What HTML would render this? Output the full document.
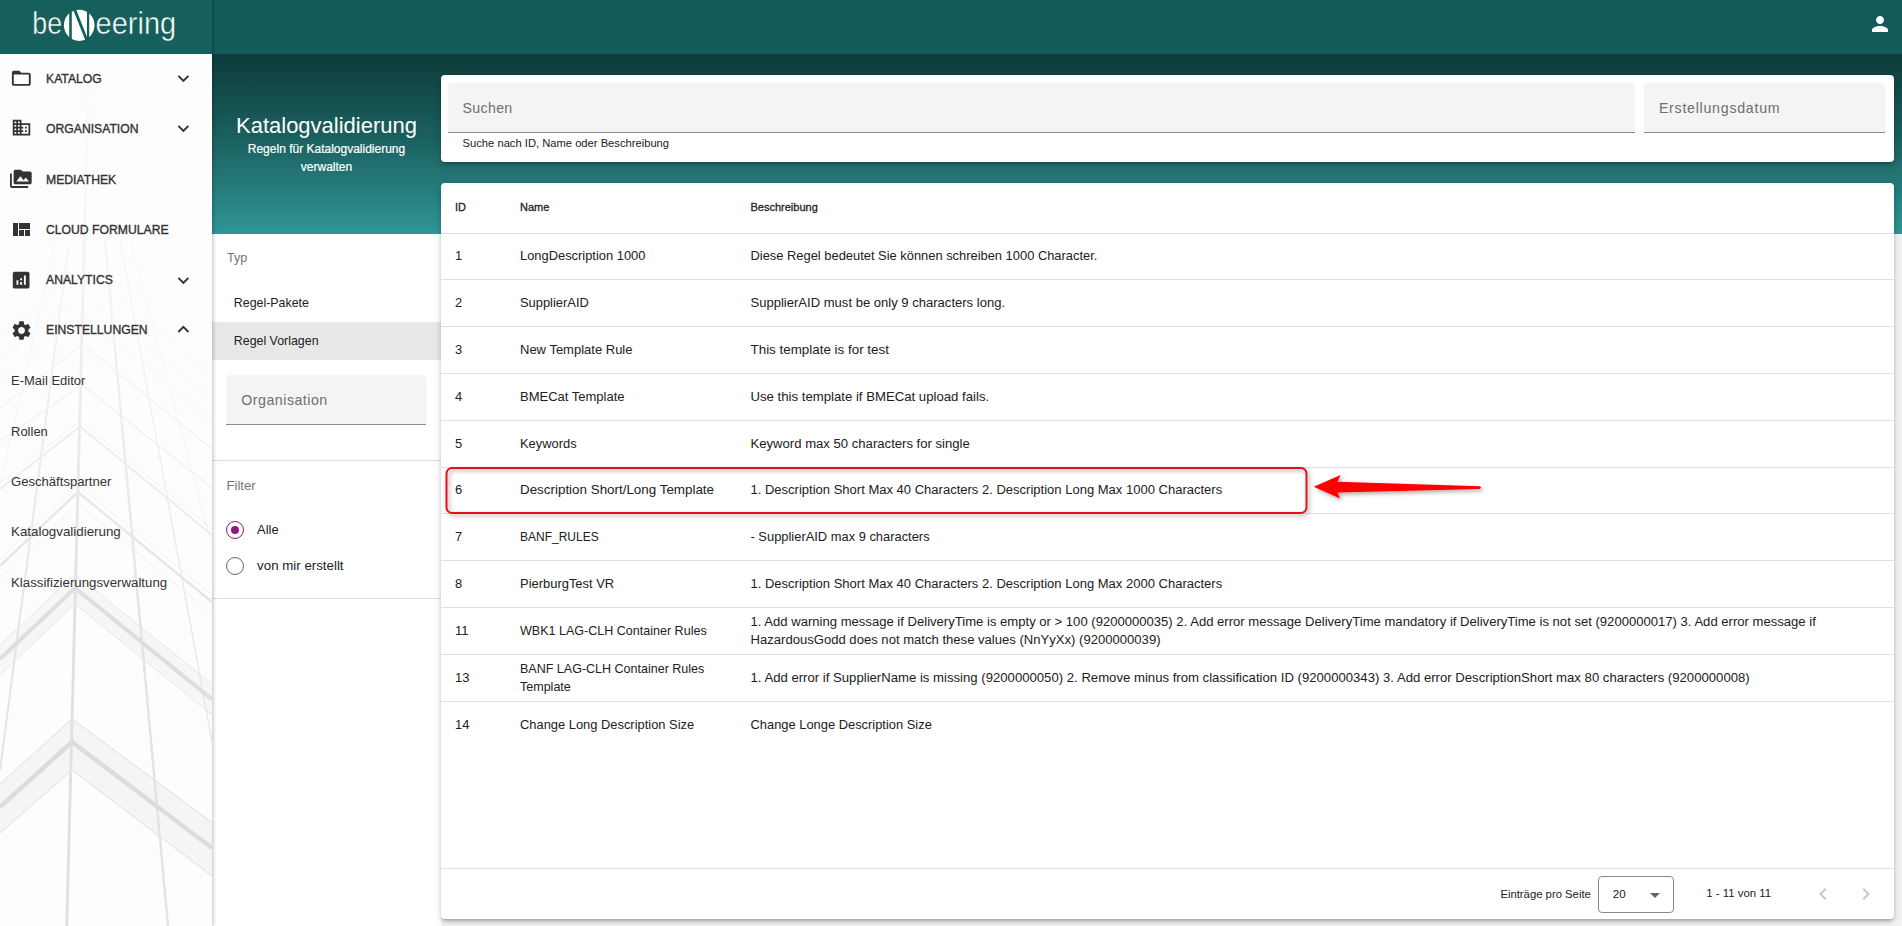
<!DOCTYPE html>
<html><head><meta charset="utf-8">
<style>
*{box-sizing:border-box;margin:0;padding:0}
html,body{width:1902px;height:926px;overflow:hidden;font-family:"Liberation Sans",sans-serif;background:#f2f2f2;color:#212121}
.a{position:absolute}
#hdr{left:0;top:0;width:1902px;height:54px;background:#135b59;z-index:3}
#grad{left:212px;top:54px;width:1690px;height:180px;background:linear-gradient(#0e3b3b 0%,#1a5f5e 45%,#2f9695 100%)}
#side{left:0;top:54px;width:212px;height:872px;background:#fdfdfd;z-index:2;box-shadow:1px 0 4px rgba(0,0,0,.25);overflow:hidden}
#lp{left:212px;top:234px;width:229px;height:692px;background:#fff}
.card{background:#fff;border-radius:4px;box-shadow:0 3px 3px -2px rgba(0,0,0,.2),0 3px 4px 0 rgba(0,0,0,.14),0 1px 8px 0 rgba(0,0,0,.12)}
.cell{position:absolute;color:#212121;white-space:nowrap;line-height:18px}
.hl{position:absolute;left:441px;width:1453px;height:1px;background:#e0e0e0}
</style></head>
<body>
<div id="hdr" class="a">
  <div class="a" style="left:0;top:0;width:240px;height:54px;overflow:hidden"><div class="a" style="left:0;top:-10px;width:212px;height:74px;background:#155f5d;box-shadow:1px 0 3px rgba(0,0,0,.3)"></div></div>
  <svg class="a" style="left:0;top:0" width="212" height="54" viewBox="0 0 212 54">
    <text x="32.3" y="33.7" font-family="Liberation Sans" font-size="32" fill="#fff" stroke="#155f5d" stroke-width="0.5" textLength="29.8" lengthAdjust="spacingAndGlyphs">be</text>
    <ellipse cx="79.2" cy="25.3" rx="15.3" ry="15.6" fill="#fff"/>
    <rect x="69.2" y="8" width="2.6" height="36" fill="#155f5d"/>
    <rect x="87" y="8" width="2.2" height="36" fill="#155f5d"/>
    <polygon points="72.5,8 75.5,8 89,42 86,42" fill="#155f5d"/>
    <text x="95.6" y="33.7" font-family="Liberation Sans" font-size="32" fill="#fff" stroke="#155f5d" stroke-width="0.5" textLength="80.6" lengthAdjust="spacingAndGlyphs">eering</text>
  </svg>
  <svg class="a" style="left:1868px;top:12px" width="24" height="24" viewBox="0 0 24 24"><path fill="#fff" d="M12 12c2.21 0 4-1.79 4-4s-1.79-4-4-4-4 1.79-4 4 1.79 4 4 4zm0 2c-2.67 0-8 1.34-8 4v2h16v-2c0-2.66-5.33-4-8-4z"/></svg>
</div>
<div id="grad" class="a"></div>
<div id="side" class="a">
<svg class="a" style="left:0;top:0" width="212" height="872" viewBox="0 54 212 872"><defs><linearGradient id="fadeg" x1="0" y1="0" x2="0" y2="1"><stop offset="0" stop-color="#000"/><stop offset="0.15" stop-color="#333"/><stop offset="0.45" stop-color="#aaa"/><stop offset="0.65" stop-color="#fff"/></linearGradient><mask id="fadem" maskUnits="userSpaceOnUse" x="0" y="54" width="212" height="872"><rect x="0" y="54" width="212" height="872" fill="url(#fadeg)"/></mask></defs><g mask="url(#fadem)"><polygon points="0,784 72,719 212,822.5 212,876 72,770 0,833" fill="#f5f5f5"/><polygon points="0,645 75,574 212,684 212,715 75,604 0,675" fill="#f6f6f6"/><line x1="89" y1="54" x2="66.8" y2="926" stroke="#e0e0e0" stroke-width="2.8"/><line x1="68" y1="250" x2="0" y2="770" stroke="#e4e4e4" stroke-width="2"/><line x1="55" y1="243" x2="0" y2="485" stroke="#efefef" stroke-width="1"/><line x1="105" y1="240" x2="168" y2="926" stroke="#e3e3e3" stroke-width="2.4"/><line x1="120" y1="240" x2="212" y2="742" stroke="#e6e6e6" stroke-width="1.3"/><line x1="131" y1="245" x2="212" y2="545" stroke="#efefef" stroke-width="1"/><polyline points="0,807 72,742 212,848" fill="none" stroke="#dcdcdc" stroke-width="4.5"/><polyline points="0,784 72,719 212,822.5" fill="none" stroke="#e6e6e6" stroke-width="1.2"/><polyline points="0,833 72,770 212,876" fill="none" stroke="#e6e6e6" stroke-width="1.2"/><polyline points="0,659 75,588 212,699.4" fill="none" stroke="#dedede" stroke-width="4"/><polyline points="0,645 75,574 212,684" fill="none" stroke="#e6e6e6" stroke-width="1"/><polyline points="0,675 75,604 212,715" fill="none" stroke="#e6e6e6" stroke-width="1"/><polyline points="0,566 77.8,492 212,602" fill="none" stroke="#e3e3e3" stroke-width="2.5"/><polyline points="0,559 77.8,485 212,595" fill="none" stroke="#efefef" stroke-width="1"/><polyline points="0,578 77.8,504 212,614" fill="none" stroke="#efefef" stroke-width="1"/><polyline points="0,489 80,426.5 212,535" fill="none" stroke="#e6e6e6" stroke-width="1.8"/><polyline points="0,483 80,420.6 212,529" fill="none" stroke="#efefef" stroke-width="1"/><polyline points="0,441 82,384.7 212,488" fill="none" stroke="#e9e9e9" stroke-width="1.2"/><polyline points="0,408 82.6,344 212,449" fill="none" stroke="#eaeaea" stroke-width="1.2"/><polyline points="0,380 83,316 212,421" fill="none" stroke="#efefef" stroke-width="1"/><polyline points="0,358 84,294 212,399" fill="none" stroke="#f0f0f0" stroke-width="1"/><polyline points="0,334 85,270 212,375" fill="none" stroke="#f2f2f2" stroke-width="1"/></g></svg>
<svg class="a" style="left:10.2px;top:12.80px" width="22.6" height="22.6" viewBox="0 0 24 24"><path fill="#333" d="M20 6h-8l-2-2H4c-1.1 0-1.99.9-1.99 2L2 18c0 1.1.9 2 2 2h16c1.1 0 2-.9 2-2V8c0-1.1-.9-2-2-2zm0 12H4V8h16v10z"/></svg>
<div class="a" style="left:46px;top:18.67px;font-size:12.2px;line-height:12.2px;color:#333;font-weight:400;white-space:nowrap;-webkit-text-stroke:0.35px #333">KATALOG</div>
<svg class="a" style="left:172.10px;top:12.81px" width="22.8" height="22.8" viewBox="0 0 24 24"><path fill="#333" d="M16.59 8.59L12 13.17 7.41 8.59 6 10l6 6 6-6z"/></svg>
<svg class="a" style="left:11px;top:62.50px" width="21" height="21" viewBox="0 0 24 24"><path fill="#333" d="M12 7V3H2v18h20V7H12zM6 19H4v-2h2v2zm0-4H4v-2h2v2zm0-4H4V9h2v2zm0-4H4V5h2v2zm4 12H8v-2h2v2zm0-4H8v-2h2v2zm0-4H8V9h2v2zm0-4H8V5h2v2zm10 12h-8v-2h2v-2h-2v-2h2v-2h-2V9h8v10zm-2-8h-2v2h2v-2zm0 4h-2v2h2v-2z"/></svg>
<div class="a" style="left:46px;top:68.97px;font-size:12.2px;line-height:12.2px;color:#333;font-weight:400;white-space:nowrap;-webkit-text-stroke:0.35px #333">ORGANISATION</div>
<svg class="a" style="left:172.10px;top:63.12px" width="22.8" height="22.8" viewBox="0 0 24 24"><path fill="#333" d="M16.59 8.59L12 13.17 7.41 8.59 6 10l6 6 6-6z"/></svg>
<svg class="a" style="left:10.3px;top:114.20px" width="21.7" height="21.7" viewBox="0 0 24 24"><path fill="#333" d="M2 6H0v5h.01L0 20c0 1.1.9 2 2 2h18v-2H2V6zm20-2h-8l-2-2H6c-1.1 0-1.99.9-1.99 2L4 16c0 1.1.9 2 2 2h16c1.1 0 2-.9 2-2V6c0-1.1-.9-2-2-2zM7 15l4.5-6 3.5 4.51 2.5-3.01L21 15H7z"/></svg>
<div class="a" style="left:46px;top:119.67px;font-size:12.2px;line-height:12.2px;color:#333;font-weight:400;white-space:nowrap;-webkit-text-stroke:0.35px #333">MEDIATHEK</div>
<svg class="a" style="left:9.3px;top:163.50px" width="24" height="24" viewBox="0 0 24 24"><path fill="#333" d="M10 18h5v-6h-5v6zm-6 0h5V5H4v13zm12 0h5v-6h-5v6zM10 5v6h11V5H10z"/></svg>
<div class="a" style="left:46px;top:169.67px;font-size:12.2px;line-height:12.2px;color:#333;font-weight:400;white-space:nowrap;-webkit-text-stroke:0.35px #333">CLOUD FORMULARE</div>
<svg class="a" style="left:10px;top:214.60px" width="22.3" height="22.3" viewBox="0 0 24 24"><path fill="#333" d="M19 3H5c-1.1 0-2 .9-2 2v14c0 1.1.9 2 2 2h14c1.1 0 2-.9 2-2V5c0-1.1-.9-2-2-2zM9 17H7v-5h2v5zm4 0h-2v-3h2v3zm0-5h-2v-2h2v2zm4 5h-2V7h2v10z"/></svg>
<div class="a" style="left:46px;top:219.77px;font-size:12.2px;line-height:12.2px;color:#333;font-weight:400;white-space:nowrap;-webkit-text-stroke:0.35px #333">ANALYTICS</div>
<svg class="a" style="left:172.10px;top:214.81px" width="22.8" height="22.8" viewBox="0 0 24 24"><path fill="#333" d="M16.59 8.59L12 13.17 7.41 8.59 6 10l6 6 6-6z"/></svg>
<svg class="a" style="left:9.6px;top:264.80px" width="23" height="23" viewBox="0 0 24 24"><path fill="#333" d="M19.14 12.94c.04-.3.06-.61.06-.94 0-.32-.02-.64-.07-.94l2.03-1.58c.18-.14.23-.41.12-.61l-1.92-3.32c-.12-.22-.37-.29-.59-.22l-2.39.96c-.5-.38-1.03-.7-1.62-.94l-.36-2.54c-.04-.24-.24-.41-.48-.41h-3.84c-.24 0-.43.17-.47.41l-.36 2.54c-.59.24-1.13.57-1.62.94l-2.39-.96c-.22-.08-.47 0-.59.22L2.74 8.87c-.12.21-.08.47.12.61l2.03 1.58c-.05.3-.09.63-.09.94s.02.64.07.94l-2.03 1.58c-.18.14-.23.41-.12.61l1.92 3.32c.12.22.37.29.59.22l2.39-.96c.5.38 1.03.7 1.62.94l.36 2.54c.05.24.24.41.48.41h3.84c.24 0 .44-.17.47-.41l.36-2.54c.59-.24 1.13-.56 1.62-.94l2.39.96c.22.08.47 0 .59-.22l1.92-3.32c.12-.22.07-.47-.12-.61l-2.01-1.58zM12 15.6c-1.98 0-3.6-1.62-3.6-3.6s1.62-3.6 3.6-3.6 3.6 1.62 3.6 3.6-1.62 3.6-3.6 3.6z"/></svg>
<div class="a" style="left:46px;top:270.47px;font-size:12.2px;line-height:12.2px;color:#333;font-weight:400;white-space:nowrap;-webkit-text-stroke:0.35px #333">EINSTELLUNGEN</div>
<svg class="a" style="left:172.10px;top:264.31px" width="22.8" height="22.8" viewBox="0 0 24 24"><path fill="#333" d="M12 8l-6 6 1.41 1.41L12 10.83l4.59 4.58L18 14z"/></svg>
<div class="a" style="left:11px;top:320.40px;font-size:13px;line-height:13px;color:#333;font-weight:400;white-space:nowrap">E-Mail Editor</div>
<div class="a" style="left:11px;top:370.70px;font-size:13px;line-height:13px;color:#333;font-weight:400;white-space:nowrap">Rollen</div>
<div class="a" style="left:11px;top:420.91px;font-size:13.1px;line-height:13.1px;color:#333;font-weight:400;white-space:nowrap">Geschäftspartner</div>
<div class="a" style="left:11px;top:471.00px;font-size:13.35px;line-height:13.35px;color:#333;font-weight:400;white-space:nowrap">Katalogvalidierung</div>
<div class="a" style="left:11px;top:521.78px;font-size:13.25px;line-height:13.25px;color:#333;font-weight:400;white-space:nowrap">Klassifizierungsverwaltung</div>
</div>
<div id="lp" class="a"></div>
<div class="a" style="left:212px;top:113.4px;width:229px;text-align:center;color:#fff;z-index:1"><div style="font-size:22px;line-height:26px">Katalogvalidierung</div><div style="font-size:12px;line-height:18px;margin-top:1px;-webkit-text-stroke:0.2px #fff">Regeln für Katalogvalidierung<br>verwalten</div></div>
<div class="a" style="left:227px;top:252.43px;font-size:12.6px;line-height:12.6px;color:#757575;font-weight:400;white-space:nowrap;">Typ</div>
<div class="a" style="left:212px;top:322px;width:229px;height:38px;background:#e8e8e8"></div>
<div class="a" style="left:233.8px;top:296.50px;font-size:12.4px;line-height:12.4px;color:#212121;font-weight:400;white-space:nowrap;">Regel-Pakete</div>
<div class="a" style="left:233.8px;top:334.50px;font-size:12.4px;line-height:12.4px;color:#212121;font-weight:400;white-space:nowrap;">Regel Vorlagen</div>
<div class="a" style="left:226px;top:375px;width:200px;height:50px;background:#f4f4f4;border-radius:4px 4px 0 0;border-bottom:1px solid #8a8a8a"></div>
<div class="a" style="left:241.3px;top:392.98px;font-size:14.2px;line-height:14.2px;color:#6f6f6f;font-weight:400;white-space:nowrap;letter-spacing:0.5px">Organisation</div>
<div class="a" style="left:212px;top:460px;width:229px;height:1px;background:#e0e0e0"></div>
<div class="a" style="left:226.4px;top:479.03px;font-size:13.2px;line-height:13.2px;color:#757575;font-weight:400;white-space:nowrap;">Filter</div>
<div class="a" style="left:226px;top:521px;width:18px;height:18px;border:1.7px solid #8b1a7f;border-radius:50%"></div>
<div class="a" style="left:231px;top:526px;width:8px;height:8px;background:#8b1a7f;border-radius:50%"></div>
<div class="a" style="left:257.1px;top:523.98px;font-size:12.9px;line-height:12.9px;color:#212121;font-weight:400;white-space:nowrap;">Alle</div>
<div class="a" style="left:226px;top:557px;width:18px;height:18px;border:1.6px solid #666;border-radius:50%"></div>
<div class="a" style="left:257.1px;top:559.14px;font-size:13.3px;line-height:13.3px;color:#212121;font-weight:400;white-space:nowrap;">von mir erstellt</div>
<div class="a" style="left:212px;top:598px;width:229px;height:1px;background:#e0e0e0"></div>
<div class="a card" style="left:441px;top:75px;width:1453px;height:87px"></div>
<div class="a" style="left:448px;top:83px;width:1187px;height:50px;background:#f4f4f4;border-radius:4px 4px 0 0;border-bottom:1px solid #8a8a8a"></div>
<div class="a" style="left:462.6px;top:100.88px;font-size:14.2px;line-height:14.2px;color:#6f6f6f;font-weight:400;white-space:nowrap;letter-spacing:0.3px">Suchen</div>
<div class="a" style="left:462.6px;top:138.22px;font-size:11.2px;line-height:11.2px;color:#222;font-weight:400;white-space:nowrap;">Suche nach ID, Name oder Beschreibung</div>
<div class="a" style="left:1644px;top:83px;width:241px;height:50px;background:#f4f4f4;border-radius:4px 4px 0 0;border-bottom:1px solid #8a8a8a"></div>
<div class="a" style="left:1658.9px;top:100.88px;font-size:14.2px;line-height:14.2px;color:#6f6f6f;font-weight:400;white-space:nowrap;letter-spacing:0.74px">Erstellungsdatum</div>
<div class="a card" style="left:441px;top:183px;width:1453px;height:736px"></div>
<div class="a" style="left:455px;top:202.19px;font-size:11px;line-height:11px;color:#1f1f1f;font-weight:400;white-space:nowrap;-webkit-text-stroke:0.3px #1f1f1f">ID</div>
<div class="a" style="left:520px;top:202.19px;font-size:11px;line-height:11px;color:#1f1f1f;font-weight:400;white-space:nowrap;-webkit-text-stroke:0.3px #1f1f1f">Name</div>
<div class="a" style="left:750.5px;top:202.19px;font-size:11px;line-height:11px;color:#1f1f1f;font-weight:400;white-space:nowrap;-webkit-text-stroke:0.3px #1f1f1f">Beschreibung</div>
<div class="hl" style="top:233px"></div>
<div class="hl" style="top:279px"></div>
<div class="hl" style="top:326px"></div>
<div class="hl" style="top:373px"></div>
<div class="hl" style="top:420px"></div>
<div class="hl" style="top:467px"></div>
<div class="hl" style="top:513px"></div>
<div class="hl" style="top:560px"></div>
<div class="hl" style="top:607px"></div>
<div class="hl" style="top:654px"></div>
<div class="hl" style="top:701px"></div>
<div class="cell" style="left:455px;top:247.30px;font-size:12.9px">1</div>
<div class="cell" style="left:520px;top:247.30px;font-size:12.9px">LongDescription 1000</div>
<div class="cell" style="left:750.5px;top:247.30px;font-size:12.9px">Diese Regel bedeutet Sie können schreiben 1000 Character.</div>
<div class="cell" style="left:455px;top:294.10px;font-size:12.9px">2</div>
<div class="cell" style="left:520px;top:294.10px;font-size:12.9px">SupplierAID</div>
<div class="cell" style="left:750.5px;top:294.05px;font-size:13.05px">SupplierAID must be only 9 characters long.</div>
<div class="cell" style="left:455px;top:341.10px;font-size:12.9px">3</div>
<div class="cell" style="left:520px;top:341.07px;font-size:13.0px">New Template Rule</div>
<div class="cell" style="left:750.5px;top:340.93px;font-size:13.4px">This template is for test</div>
<div class="cell" style="left:455px;top:387.60px;font-size:12.9px">4</div>
<div class="cell" style="left:520px;top:387.57px;font-size:13.0px">BMECat Template</div>
<div class="cell" style="left:750.5px;top:387.50px;font-size:13.18px">Use this template if BMECat upload fails.</div>
<div class="cell" style="left:455px;top:434.60px;font-size:12.9px">5</div>
<div class="cell" style="left:520px;top:434.60px;font-size:12.9px">Keywords</div>
<div class="cell" style="left:750.5px;top:434.52px;font-size:13.12px">Keyword max 50 characters for single</div>
<div class="cell" style="left:455px;top:481.40px;font-size:12.9px">6</div>
<div class="cell" style="left:520px;top:481.23px;font-size:13.4px">Description Short/Long Template</div>
<div class="cell" style="left:750.5px;top:481.36px;font-size:13.02px">1. Description Short Max 40 Characters 2. Description Long Max 1000 Characters</div>
<div class="cell" style="left:455px;top:528.10px;font-size:12.9px">7</div>
<div class="cell" style="left:520px;top:528.41px;font-size:12.0px">BANF_RULES</div>
<div class="cell" style="left:750.5px;top:528.10px;font-size:12.9px">- SupplierAID max 9 characters</div>
<div class="cell" style="left:455px;top:574.80px;font-size:12.9px">8</div>
<div class="cell" style="left:520px;top:574.78px;font-size:12.95px">PierburgTest VR</div>
<div class="cell" style="left:750.5px;top:574.76px;font-size:13.02px">1. Description Short Max 40 Characters 2. Description Long Max 2000 Characters</div>
<div class="cell" style="left:455px;top:621.60px;font-size:12.9px">11</div>
<div class="cell" style="left:520px;top:621.72px;font-size:12.54px">WBK1 LAG-CLH Container Rules</div>
<div class="cell" style="left:750.5px;top:612.54px;font-size:13.08px">1. Add warning message if DeliveryTime is empty or &gt; 100 (9200000035) 2. Add error message DeliveryTime mandatory if DeliveryTime is not set (9200000017) 3. Add error message if<br>HazardousGodd does not match these values (NnYyXx) (9200000039)</div>
<div class="cell" style="left:455px;top:668.60px;font-size:12.9px">13</div>
<div class="cell" style="left:520px;top:659.73px;font-size:12.52px">BANF LAG-CLH Container Rules<br>Template</div>
<div class="cell" style="left:750.5px;top:668.51px;font-size:13.15px">1. Add error if SupplierName is missing (9200000050) 2. Remove minus from classification ID (9200000343) 3. Add error DescriptionShort max 80 characters (9200000008)</div>
<div class="cell" style="left:455px;top:715.60px;font-size:12.9px">14</div>
<div class="cell" style="left:520px;top:715.60px;font-size:12.9px">Change Long Description Size</div>
<div class="cell" style="left:750.5px;top:715.60px;font-size:12.9px">Change Longe Description Size</div>
<div class="hl" style="top:868px"></div>
<div class="a" style="left:1500.4px;top:888.83px;font-size:11.3px;line-height:11.3px;color:#222;font-weight:400;white-space:nowrap;">Einträge pro Seite</div>
<div class="a" style="left:1598px;top:876px;width:76px;height:37px;border:1px solid #8a8a8a;border-radius:4px"></div>
<div class="a" style="left:1612.7px;top:887.78px;font-size:11.6px;line-height:11.6px;color:#222;font-weight:400;white-space:nowrap;">20</div>
<svg class="a" style="left:1650px;top:892.6px" width="10" height="5" viewBox="0 0 10 5"><path d="M0 0l5 5 5-5z" fill="#666"/></svg>
<div class="a" style="left:1706.3px;top:887.65px;font-size:11.4px;line-height:11.4px;color:#222;font-weight:400;white-space:nowrap;">1 - 11 von 11</div>
<svg class="a" style="left:1811px;top:882px" width="24" height="24" viewBox="0 0 24 24"><path fill="#c8c8c8" d="M15.41 7.41L14 6l-6 6 6 6 1.41-1.41L10.83 12z"/></svg>
<svg class="a" style="left:1854px;top:882px" width="24" height="24" viewBox="0 0 24 24"><path fill="#c8c8c8" d="M10 6L8.59 7.41 13.17 12l-4.58 4.59L10 18l6-6z"/></svg>
<svg class="a" style="left:430px;top:455px;z-index:5" width="1070" height="70" viewBox="430 455 1070 70">
<defs><filter id="ds" x="-5%" y="-50%" width="110%" height="200%"><feDropShadow dx="2" dy="2" stdDeviation="2" flood-color="#000" flood-opacity="0.35"/></filter></defs>
<g filter="url(#ds)">
<rect x="446.5" y="468" width="860" height="45" rx="5.5" ry="5.5" fill="none" stroke="#e8101a" stroke-width="2"/>
<polygon points="1313.8,486.8 1340.6,475 1337.5,481.8 1480,486.3 1481,487.6 1480,489 1337.5,492.5 1340,498.6" fill="#ff0000"/>
</g></svg>
</body></html>
